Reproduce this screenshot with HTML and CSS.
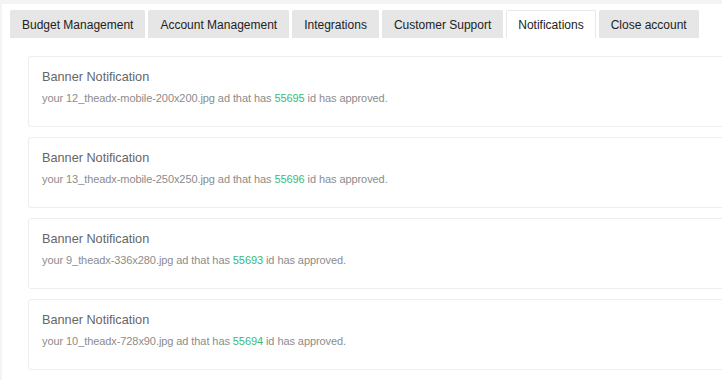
FILE: index.html
```html
<!DOCTYPE html>
<html lang="en">
<head>
    <meta charset="UTF-8">
    <meta name="viewport" content="width=device-width, initial-scale=1.0">
    <title>Notifications</title>
    <link rel="stylesheet" href="styles.css">
</head>
<body>

    <div id="panel">
        <!-- Tabs -->
        <div class="tabs">
            <button class="tab">Budget Management</button>
            <button class="tab">Account Management</button>
            <button class="tab">Integrations</button>
            <button class="tab">Customer Support</button>
            <button class="tab active">Notifications</button>
            <button class="tab">Close account</button>
        </div>

        <!-- Notification list -->
        <div class="notifications">
            <div class="notification-card">
                <h4>Banner Notification</h4>
                <p>your 12_theadx-mobile-200x200.jpg ad that has <span class="ad-id">55695</span> id has approved.</p>
            </div>
            <div class="notification-card">
                <h4>Banner Notification</h4>
                <p>your 13_theadx-mobile-250x250.jpg ad that has <span class="ad-id">55696</span> id has approved.</p>
            </div>
            <div class="notification-card">
                <h4>Banner Notification</h4>
                <p>your 9_theadx-336x280.jpg ad that has <span class="ad-id">55693</span> id has approved.</p>
            </div>
            <div class="notification-card">
                <h4>Banner Notification</h4>
                <p>your 10_theadx-728x90.jpg ad that has <span class="ad-id">55694</span> id has approved.</p>
            </div>
        </div>
    </div>

</body>
</html>
```

FILE: styles.css
```css
* {
    box-sizing: border-box;
    margin: 0;
    padding: 0;
}

html, body {
    height: 100%;
}

body {
    font-family: "Liberation Sans", Arial, sans-serif;
    background: #f4f4f4;
    overflow: hidden;
    padding: 4px 0 0 2px;
}

#panel {
    background: #fff;
    height: 100%;
    padding: 6px 0 0 8px;
}

/* Tabs */
.tabs {
    display: flex;
    gap: 3px;
}

.tab {
    flex-shrink: 0;
    white-space: nowrap;
    height: 28px;
    padding: 0 11px;
    background: #e6e6e6;
    border: 1px solid #e6e6e6;
    border-bottom: none;
    border-radius: 2px 2px 0 0;
    color: #222;
    font-family: inherit;
    font-size: 12px;
    cursor: pointer;
}

.tab.active {
    background: #fff;
    border-color: #e8e8e8;
}

/* Notification cards - they run on past the right edge */
.notifications {
    margin: 18px -20px 0 18px;
    display: flex;
    flex-direction: column;
    gap: 10px;
}

.notification-card {
    height: 71px;
    border: 1px solid #eee;
    border-radius: 3px;
    padding: 13px 13px 0;
}

.notification-card h4 {
    font-size: 12.7px;
    font-weight: normal;
    color: #666;
    line-height: 15px;
    margin-bottom: 7px;
}

.notification-card p {
    font-size: 11px;
    letter-spacing: -0.08px;
    color: #8c8c8c;
    line-height: 13px;
}

.ad-id {
    color: #3ab97a;
}
```
